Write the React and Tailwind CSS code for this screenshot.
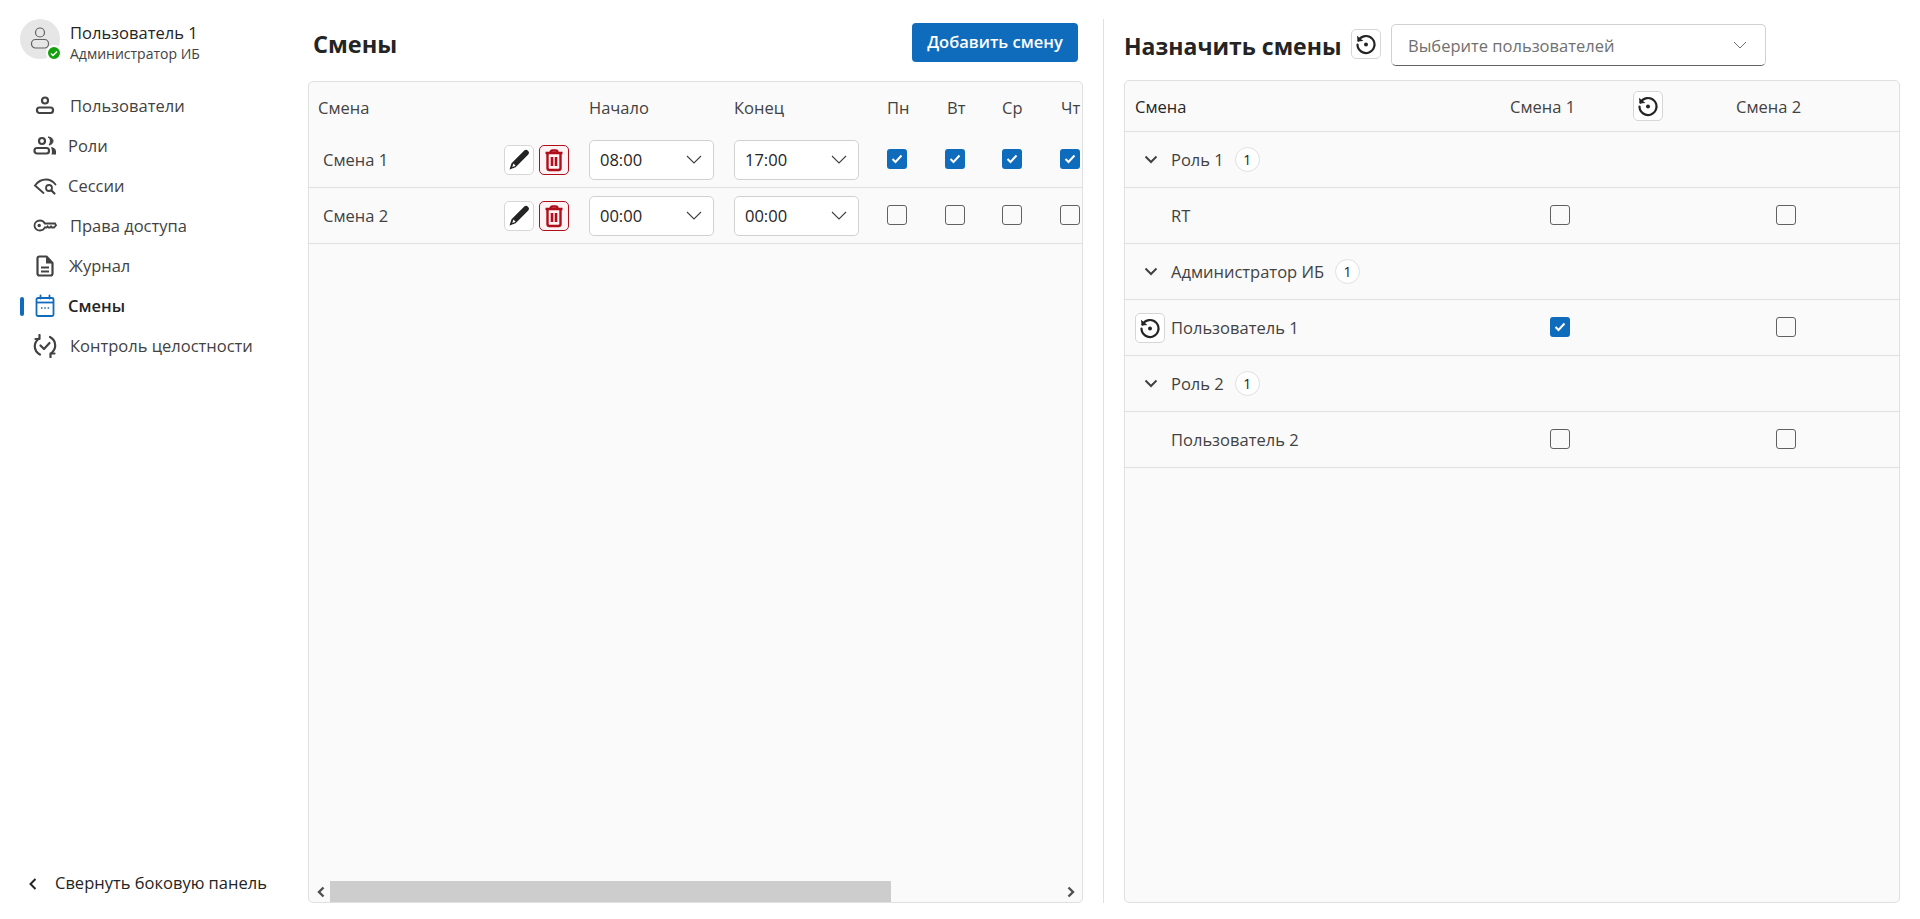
import React from "react";

const PersonIcon = () => (
  <svg width="24" height="24" viewBox="0 0 24 24" fill="none" stroke="#424242" strokeWidth="2.200">
    <circle cx="12" cy="6.500" r="3" />
    <rect x="4" y="13.500" width="16" height="5.500" rx="2.500" />
  </svg>
);

const RolesIcon = () => (
  <svg width="24" height="24" viewBox="0 0 24 24" fill="none" stroke="#424242" strokeWidth="2.200">
    <circle cx="9" cy="7" r="3" />
    <rect x="1.500" y="14" width="14.500" height="5.500" rx="2.500" />
    <path d="M15 3c3.500 0 5 2 5 4s-1.500 3.800-4 4c1-1.100 1.400-2.600 1.400-4S17 4 15 3Z" fill="#424242" strokeWidth="1" />
    <path d="M18 13c3 .3 5 2 5 4.500V20.500h-4.500c.8-2.500.4-5-.5-7.500Z" fill="#424242" stroke="none" />
  </svg>
);

const SessionsIcon = () => (
  <svg width="24" height="24" viewBox="0 0 24 24" fill="none" stroke="#424242" strokeWidth="1.800" strokeLinecap="round">
    <path d="M10.500 19 2 11.500C4.500 8 8.500 5.500 13 5.500c3.500 0 7 1.800 9.500 5" />
    <circle cx="16" cy="14" r="3" />
    <path d="m18.500 16.500 3 3" strokeWidth="2.200" />
  </svg>
);

const KeyIcon = () => (
  <svg width="24" height="24" viewBox="0 0 24 24" fill="none" stroke="#424242" strokeWidth="1.800">
    <path d="M7 6.500c2.300 0 4 1.300 4.800 3H22l1 1.800-2 2.200h-2l-1-1.200-1 1.200h-1.500l-1-1.200-1 1.200h-1.700c-.8 1.800-2.500 3-4.800 3C4 16.500 1.500 14.300 1.500 11.500S4 6.500 7 6.500Z" />
    <circle cx="6.200" cy="11.500" r="1.700" fill="#424242" stroke="none" />
  </svg>
);

const DocIcon = () => (
  <svg width="24" height="24" viewBox="0 0 24 24" fill="none" stroke="#424242" strokeWidth="2.200" strokeLinejoin="round">
    <path d="M6.500 2.500h7L19.500 9v10.500a2 2 0 0 1-2 2h-11a2 2 0 0 1-2-2v-15a2 2 0 0 1 2-2Z" />
    <path d="M13 3l6.500 6.500H13Z" fill="#424242" stroke="none" />
    <path d="M8 13.500h8M8 17.500h8" />
  </svg>
);

const CalendarIcon = () => (
  <svg width="24" height="24" viewBox="0 0 24 24" fill="none" stroke="#0f6cbd" strokeWidth="1.800">
    <rect x="3.500" y="4" width="17" height="18" rx="1.500" />
    <path d="M3.500 8.500h17" />
    <path d="M7.500 1.500v3M16.500 1.500v3" strokeLinecap="round" />
    <path d="M8 14h1.500M11.300 14h1.500M14.600 14h1.500" strokeWidth="1.500" />
  </svg>
);

const SyncIcon = () => (
  <svg width="24" height="24" viewBox="0 0 24 24" fill="none" stroke="#424242" strokeWidth="2.200" strokeLinecap="round" strokeLinejoin="round">
    <path d="M7 20.500C3.800 18.700 1.800 15.800 1.800 12.200 1.800 9 3.500 6.500 6 4.500" />
    <path d="M6.500 1v4H2.500" />
    <path d="M17 3c3.200 1.700 5.200 4.800 5.200 8.500 0 3.300-1.700 6-4.200 8" />
    <path d="M17.500 23.500v-4h4" />
    <path d="m7.500 11.500 3.500 3.500 5.500-6" />
  </svg>
);

const PencilIcon = () => (
  <svg width="24" height="24" viewBox="0 0 24 24" fill="#242424">
    <path d="M17 2.700a2.800 2.800 0 0 1 4 4L8.600 19.300 2.500 21.500l2-6.300L17 2.700ZM6.300 15.800l-1 3.100 3.100-1 .2-.2-2.100-2.100-.2.200Z" />
  </svg>
);

const TrashIcon = () => (
  <svg width="24" height="24" viewBox="0 0 24 24" fill="none" stroke="#b10e1c" strokeWidth="2.400">
    <path d="M3.500 5h17" />
    <path d="M8.500 4.500c0-1.300.8-2 2-2h3c1.200 0 2 .7 2 2" />
    <path d="M5.500 5.500v14.500c0 1.200.8 2 2 2h9c1.200 0 2-.8 2-2V5.500" />
    <path d="M10 9v9M14 9v9" strokeWidth="2.600" />
  </svg>
);

const ResetIcon = () => (
  <svg width="24" height="24" viewBox="0 0 24 24" fill="none" stroke="#242424" strokeWidth="2.200" strokeLinecap="round">
    <path d="M4.500 8.500A8.500 8.500 0 1 1 3.500 12.500" />
    <path d="M3 3.800 3.600 9.500l5.800-.6Z" fill="#242424" stroke="none" />
    <circle cx="12" cy="12.500" r="2" fill="#242424" stroke="none" />
  </svg>
);

const Chevron = ({ color = "#424242" }) => (
  <svg width="16" height="9" viewBox="0 0 16 9" fill="none" stroke={color} strokeWidth="1.100">
    <path d="m1 1 7 7 7-7" />
  </svg>
);

const BoldChevron = () => (
  <svg width="14" height="9" viewBox="0 0 14 9" fill="none" stroke="#424242" strokeWidth="2">
    <path d="m1.500 1.500 5.500 5.500 5.500-5.500" />
  </svg>
);

const Checkbox = ({ checked }) =>
  checked ? (
    <span className="-mt-[1px] flex h-5 w-5 items-center justify-center rounded-[3px] bg-[#0f6cbd]">
      <svg width="12" height="10" viewBox="0 0 12 10" fill="none" stroke="#fff" strokeWidth="2">
        <path d="m1.500 5 3 3 6-6.500" />
      </svg>
    </span>
  ) : (
    <span className="-mt-[1px] block h-5 w-5 rounded-[3px] border border-[#616161]" />
  );

const IconButton = ({ children, tone = "border-[#d6d6d6] bg-white" }) => (
  <button className={`flex h-[30px] w-[30px] items-center justify-center rounded-[5px] border ${tone}`}>
    {children}
  </button>
);

const TimeSelect = ({ value }) => (
  <div className="flex h-10 w-[125px] items-center justify-between rounded-[5px] border border-[#d1d1d1] bg-white pl-[10px] pr-[11px] text-[#242424]">
    <span className="pt-[1px]">{value}</span>
    <Chevron />
  </div>
);

const NAV = [
  { label: "Пользователи", icon: <PersonIcon />, text: "ml-[13px]" },
  { label: "Роли", icon: <RolesIcon />, text: "ml-[11px]" },
  { label: "Сессии", icon: <SessionsIcon />, text: "ml-[11px]" },
  { label: "Права доступа", icon: <KeyIcon />, text: "ml-[13px]" },
  { label: "Журнал", icon: <DocIcon />, text: "ml-[12px]" },
  { label: "Смены", icon: <CalendarIcon />, text: "ml-[11px]", active: true },
  { label: "Контроль целостности", icon: <SyncIcon />, text: "ml-[13px]" },
];

const Sidebar = () => (
  <aside className="flex w-[308px] shrink-0 flex-col pb-[23px]">
    <div className="flex pl-5 pt-[19px]">
      <div className="relative h-10 w-10 rounded-full bg-[#e6e6e6]">
        <svg className="mx-auto mt-[5px]" width="28" height="28" viewBox="0 0 28 28" fill="none" stroke="#616161" strokeWidth="1.200">
          <circle cx="14" cy="8.500" r="4.500" />
          <rect x="5.500" y="15.500" width="17" height="8.500" rx="4" />
        </svg>
        <span className="absolute bottom-[-2px] right-[-2px] flex h-[16px] w-[16px] items-center justify-center rounded-full border-2 border-white bg-[#13a10e]">
          <svg width="8" height="7" viewBox="0 0 8 7" fill="none" stroke="#fff" strokeWidth="1.500">
            <path d="m1 3.500 2 2 4-4" />
          </svg>
        </span>
      </div>
      <div className="ml-[10px] mt-[3px]">
        <div className="leading-[22px] text-[#242424]">Пользователь 1</div>
        <div className="text-[14px] leading-[20px] text-[#424242]">Администратор ИБ</div>
      </div>
    </div>
    <nav className="mt-[22px]">
      {NAV.map((item) => (
        <div key={item.label} className="flex h-10 items-center pl-5">
          <span className={`h-[19px] w-1 rounded-sm ${item.active ? "bg-[#0f6cbd]" : ""}`} />
          <span className="ml-[9px] flex h-6 w-6 shrink-0 items-center justify-center">{item.icon}</span>
          <span className={`${item.text} ${item.active ? "font-semibold text-[#242424]" : "text-[#424242]"}`}>{item.label}</span>
        </div>
      ))}
    </nav>
    <div className="mt-auto flex items-center pl-[28px] text-[#242424]">
      <svg width="10" height="14" viewBox="0 0 10 14" fill="none" stroke="#242424" strokeWidth="2">
        <path d="M7.500 2 2.500 7l5 5" />
      </svg>
      <span className="ml-[17px]">Свернуть боковую панель</span>
    </div>
  </aside>
);

const SHIFTS = [
  { name: "Смена 1", start: "08:00", end: "17:00", days: true },
  { name: "Смена 2", start: "00:00", end: "00:00", days: false },
];

const ShiftsPanel = () => (
  <section className="flex w-[775px] shrink-0 flex-col pb-4">
    <div className="flex h-[81px] shrink-0 items-start justify-between px-[5px] pt-[23px]">
      <h2 className="mt-[3px] text-[23.500px] font-bold leading-[36px] text-[#242424]">Смены</h2>
      <button className="h-[39px] w-[166px] rounded-[4px] bg-[#0f6cbd] font-semibold text-white">Добавить смену</button>
    </div>
    <div className="flex min-h-0 flex-1 flex-col overflow-hidden rounded-[5px] border border-[#e0e0e0] bg-[#fafafa] text-[#242424]">
      <div className="flex-1">
        <div className="grid h-[50px] grid-cols-[271px_145px_153px_60px_55px_59px_1fr] items-center pl-[9px] pt-[2px] text-[#424242]">
          <span>Смена</span>
          <span>Начало</span>
          <span>Конец</span>
          <span>Пн</span>
          <span>Вт</span>
          <span>Ср</span>
          <span>Чт</span>
        </div>
        {SHIFTS.map((s) => (
          <div key={s.name} className="grid h-14 grid-cols-[195px_85px_145px_153px_58px_57px_58px_1fr] items-center border-b border-[#e0e0e0]">
            <span className="pl-[14px] pt-[2px] text-[#424242]">{s.name}</span>
            <div className="flex gap-[5px]">
              <IconButton><PencilIcon /></IconButton>
              <IconButton tone="border-[#b10e1c] bg-[#fdf3f4]"><TrashIcon /></IconButton>
            </div>
            <TimeSelect value={s.start} />
            <TimeSelect value={s.end} />
            <Checkbox checked={s.days} />
            <Checkbox checked={s.days} />
            <Checkbox checked={s.days} />
            <Checkbox checked={s.days} />
          </div>
        ))}
      </div>
      <div className="flex h-[21px] shrink-0 items-center">
        <span className="flex w-[21px] justify-center pl-[2px]">
          <svg width="10" height="12" viewBox="0 0 10 12" fill="none" stroke="#505050" strokeWidth="2.400">
            <path d="M7.500 1.500 3 6l4.500 4.500" />
          </svg>
        </span>
        <div className="h-full w-[561px] bg-[#cdcdcd]" />
        <span className="ml-auto flex w-[21px] justify-center pr-[2px]">
          <svg width="10" height="12" viewBox="0 0 10 12" fill="none" stroke="#505050" strokeWidth="2.400">
            <path d="M2.500 1.500 7 6l-4.500 4.500" />
          </svg>
        </span>
      </div>
    </div>
  </section>
);

const ASSIGN = [
  { label: "Роль 1", role: true },
  { label: "RT", a: false, b: false },
  { label: "Администратор ИБ", role: true },
  { label: "Пользователь 1", a: true, b: false, reset: true },
  { label: "Роль 2", role: true },
  { label: "Пользователь 2", a: false, b: false },
];

const AssignPanel = () => (
  <section className="flex min-w-0 flex-1 flex-col pb-4 pr-[20px]">
    <div className="flex h-[80px] shrink-0 items-start pt-[24px]">
      <h2 className="w-[217px] whitespace-nowrap text-[23px] font-bold leading-[44px] text-[#242424]">Назначить смены</h2>
      <span className="ml-[10px] mt-[5px]"><IconButton><ResetIcon /></IconButton></span>
      <div className="ml-[10px] flex h-[42px] w-[375px] items-center justify-between rounded-[5px] border border-[#d1d1d1] border-b-[#616161] bg-white pl-4 pr-[18px] text-[#707070]">
        <span className="pt-[2px]">Выберите пользователей</span>
        <svg width="14" height="8" viewBox="0 0 14 8" fill="none" stroke="#707070" strokeWidth="1">
          <path d="m1 1 6 6 6-6" />
        </svg>
      </div>
    </div>
    <div className="min-h-0 flex-1 overflow-hidden rounded-[5px] border border-[#e0e0e0] bg-[#fafafa] text-[#424242]">
      <div className="grid h-[51px] grid-cols-[385px_123px_103px_1fr] items-center border-b border-[#e0e0e0] pl-[10px]">
        <span className="pt-[2px] text-[#242424]">Смена</span>
        <span className="-ml-[10px] pt-[2px]">Смена 1</span>
        <span className="-ml-[10px]"><IconButton><ResetIcon /></IconButton></span>
        <span className="-ml-[10px] pt-[2px]">Смена 2</span>
      </div>
      {ASSIGN.map((row) => (
        <div key={row.label} className="grid h-14 grid-cols-[425px_226px_1fr] items-center border-b border-[#e0e0e0]">
          <div className="flex items-center">
            <span className="flex w-[46px] shrink-0 items-center pl-[10px]">
              {row.role && <span className="pl-[9px]"><BoldChevron /></span>}
              {row.reset && <IconButton><ResetIcon /></IconButton>}
            </span>
            <span className="pt-[2px] text-[#424242]">{row.label}</span>
            {row.role && (
              <span className="ml-[11px] flex h-[25px] w-[25px] items-center justify-center rounded-full border border-[#e0e0e0] bg-white text-[14px] text-[#242424]">1</span>
            )}
          </div>
          {!row.role && <Checkbox checked={row.a} />}
          {!row.role && <Checkbox checked={row.b} />}
        </div>
      ))}
    </div>
  </section>
);

export default function App() {
  return (
    <div className="flex h-[919px] w-full overflow-hidden bg-white font-['Open_Sans','Noto_Sans',sans-serif] text-[16.500px]">
      <Sidebar />
      <ShiftsPanel />
      <div className="mx-5 mb-4 mt-[19px] w-px shrink-0 bg-[#e0e0e0]" />
      <AssignPanel />
    </div>
  );
}
